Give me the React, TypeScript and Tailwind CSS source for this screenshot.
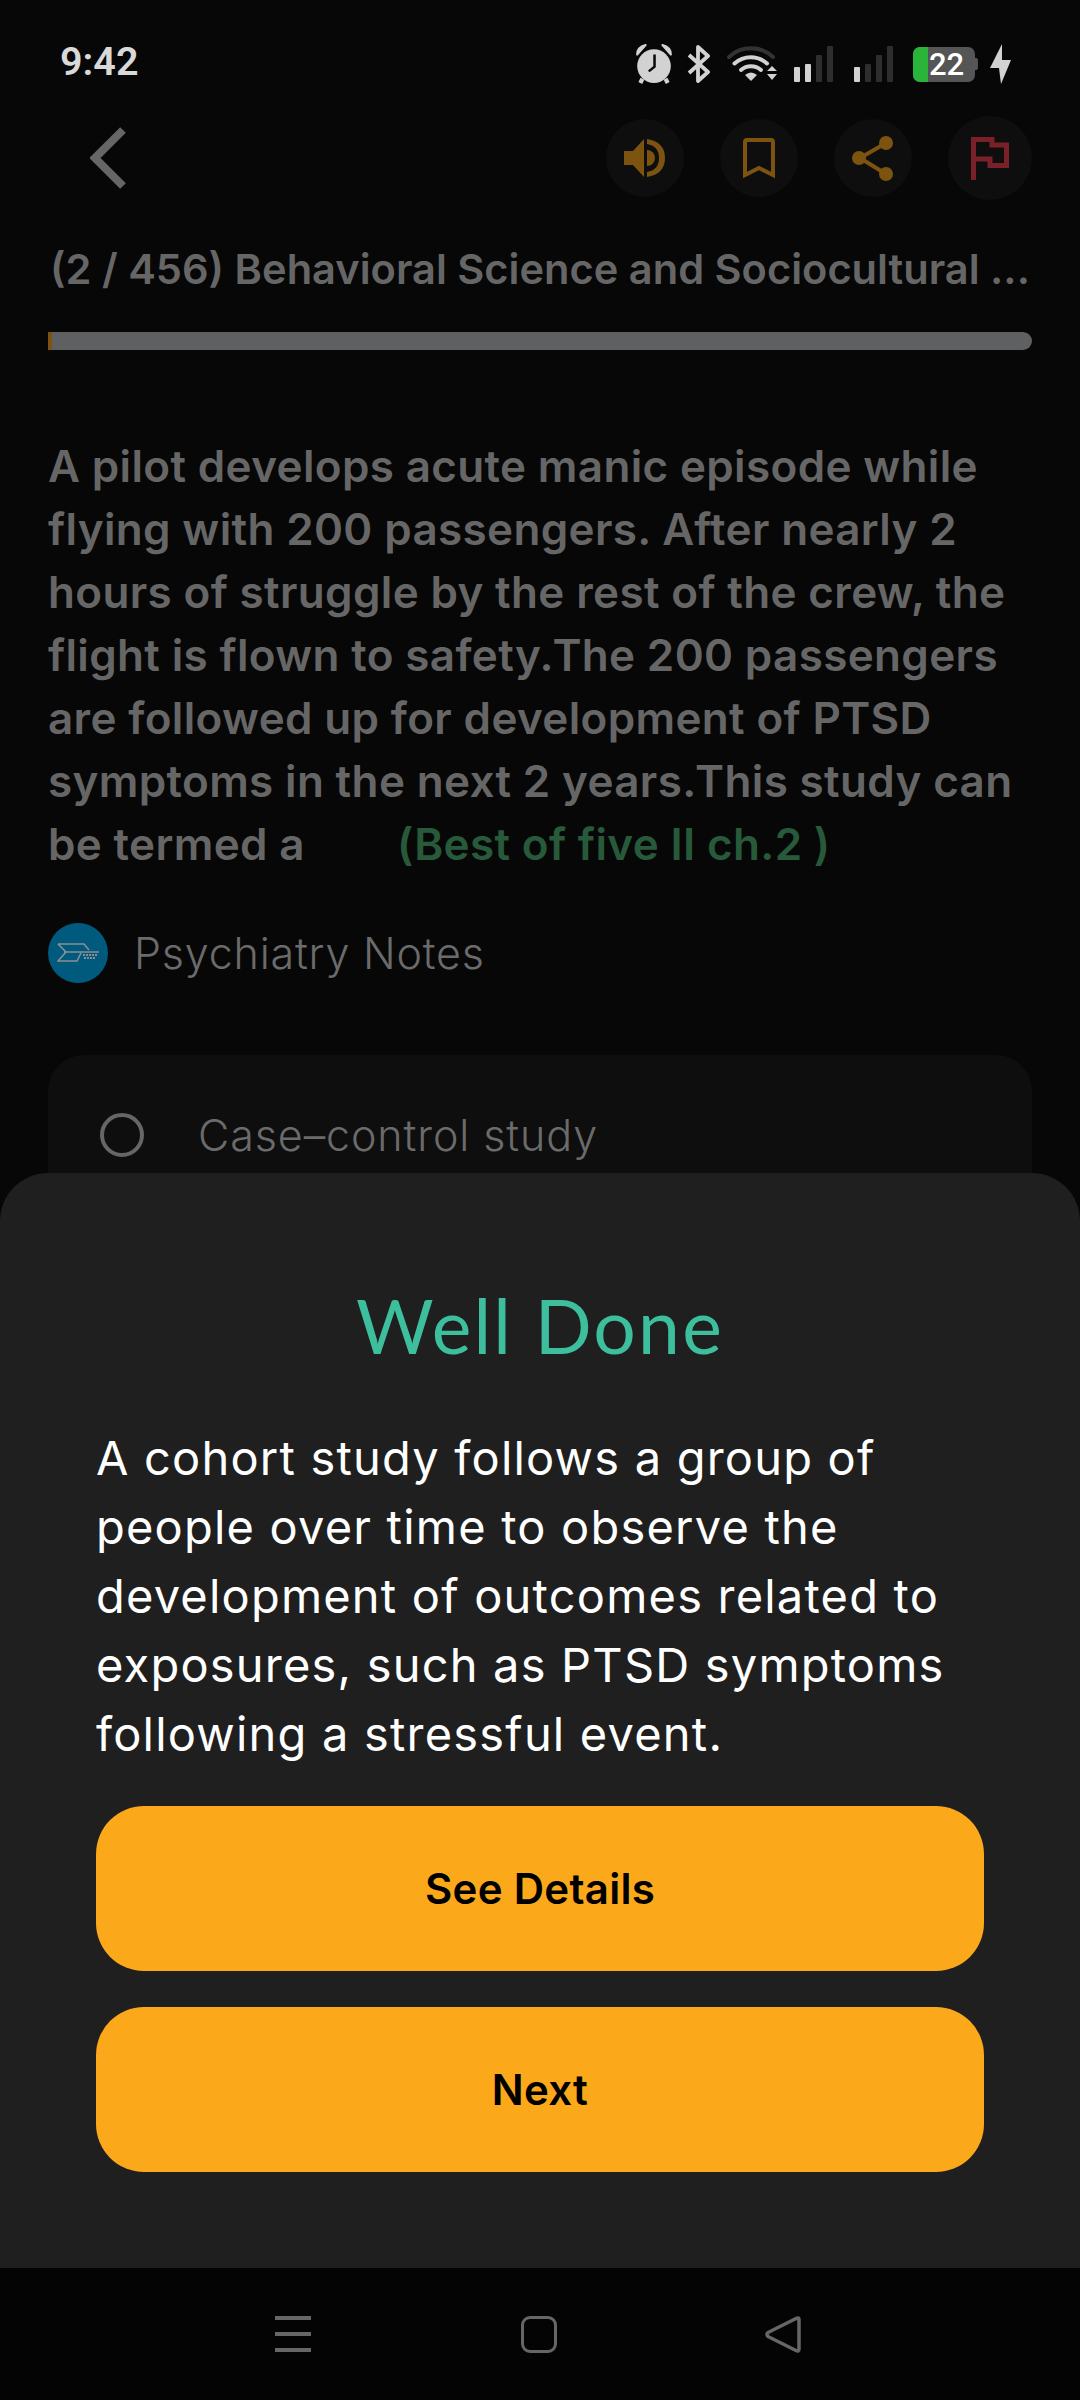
import React from "react";

const inter = { fontFamily: "Inter, 'Noto Sans', sans-serif" };

function Alarm() {
  return (
    <svg width="38" height="38" viewBox="0 0 38 38" className="-ml-[2px] h-[40px] w-[40px] shrink-0">
      <circle cx="19" cy="21" r="16" fill="#d2d2d2" />
      <path d="M3 10 Q3 3 11 1 Z" fill="#d2d2d2" stroke="#d2d2d2" strokeWidth="2" strokeLinejoin="round" />
      <path d="M35 10 Q35 3 27 1 Z" fill="#d2d2d2" stroke="#d2d2d2" strokeWidth="2" strokeLinejoin="round" />
      <path d="M8 33 L6 37 M30 33 L32 37" stroke="#d2d2d2" strokeWidth="4" />
      <path d="M19.5 10 V21.5 L14 26" fill="none" stroke="#0a0a0a" strokeWidth="2.4" />
    </svg>
  );
}

function Bluetooth() {
  return (
    <svg width="24" height="38" viewBox="0 0 24 38" className="shrink-0">
      <path d="M2 10 L21 27 L11 36 V2 L21 11 L2 28" fill="none" stroke="#d2d2d2" strokeWidth="3.8" strokeLinejoin="round" />
    </svg>
  );
}

function Wifi() {
  return (
    <svg width="50" height="38" viewBox="0 0 50 38" className="shrink-0">
      <path d="M2 12 A32 32 0 0 1 46 12" fill="none" stroke="#333333" strokeWidth="4" strokeLinecap="round" />
      <path d="M7.5 18.5 A24 24 0 0 1 40 18.5" fill="none" stroke="#d2d2d2" strokeWidth="4" strokeLinecap="round" />
      <path d="M14 25 A15 15 0 0 1 34 25" fill="none" stroke="#d2d2d2" strokeWidth="4" strokeLinecap="round" />
      <path d="M18 30 Q24 25 30 30 L24 36 Z" fill="#d2d2d2" />
      <path d="M45 21 L50 26 H40 Z M40 29 H50 L45 35 Z" fill="#d2d2d2" />
    </svg>
  );
}

function Signal({ lit }: { lit: number }) {
  const heights = [15, 18, 27, 36];
  return (
    <div className="flex h-[36px] w-[39px] shrink-0 items-end gap-[5px]">
      {heights.map((h, i) => (
        <div
          key={i}
          className={i < lit ? "w-[6px] rounded-[1px] bg-[#d2d2d2]" : "w-[6px] rounded-[1px] bg-[#2e2e2e]"}
          style={{ height: h }}
        />
      ))}
    </div>
  );
}

function Battery() {
  return (
    <div className="flex shrink-0 items-center">
      <div className="flex h-[35px] w-[62px] items-center rounded-[7px] bg-[#555555]">
        <div className="h-full w-[15px] rounded-l-[7px] bg-[#2ab53a]" />
        <span className="pl-[1px] text-[31px] leading-[35px] font-medium text-white" style={{ fontFamily: "Roboto, sans-serif" }}>
          22
        </span>
      </div>
      <div className="h-[12px] w-[3px] rounded-r-[2px] bg-[#555555]" />
    </div>
  );
}

function Bolt() {
  return (
    <svg width="22" height="40" viewBox="0 0 22 40" className="shrink-0">
      <path d="M12 0 L0 24 H9 L11 40 L21 16 H12 Z" fill="#d2d2d2" />
    </svg>
  );
}

function StatusBar() {
  return (
    <div className="flex h-[116px] shrink-0 items-start justify-between pt-[44px] pr-[68px] pl-[60px]">
      <span className="-mt-[2px] text-[39.5px] leading-[40px] font-semibold text-[#d9d9d9]" style={{ fontFamily: "Roboto, sans-serif" }}>
        9:42
      </span>
      <div className="flex items-center">
        <Alarm />
        <div className="w-[13px]" />
        <Bluetooth />
        <div className="w-[16px]" />
        <Wifi />
        <div className="w-[17px]" />
        <Signal lit={2} />
        <div className="w-[21px]" />
        <Signal lit={1} />
        <div className="w-[20px]" />
        <Battery />
        <div className="w-[12px]" />
        <Bolt />
      </div>
    </div>
  );
}

function Speaker() {
  return (
    <svg width="42" height="40" viewBox="0 0 42 40">
      <path d="M0 13 H9 L20 1 V39 L9 27 H0 Z" fill="#7c5410" />
      <path d="M23 12 A8 8 0 0 1 23 28 Z" fill="#7c5410" />
      <path d="M23 1 Q41 4 41 20 Q41 36 23 39 V34 Q35 32 35 20 Q35 8 23 6 Z" fill="#7c5410" />
    </svg>
  );
}

function Bookmark() {
  return (
    <svg width="32" height="40" viewBox="0 0 32 40">
      <path d="M2 37 V4 Q2 2 4 2 H28 Q30 2 30 4 V37 L16 30 Z" fill="none" stroke="#7c5410" strokeWidth="4" />
    </svg>
  );
}

function Share() {
  return (
    <svg width="42" height="46" viewBox="0 0 42 46">
      <path d="M34 8 L8 23 L34 39" fill="none" stroke="#7c5410" strokeWidth="4" />
      <circle cx="34" cy="8" r="7" fill="#7c5410" />
      <circle cx="7" cy="23" r="7" fill="#7c5410" />
      <circle cx="34" cy="39" r="7" fill="#7c5410" />
    </svg>
  );
}

function Flag() {
  return (
    <svg width="38" height="43" viewBox="0 0 38 43">
      <path d="M2.5 43 V2.5 H21 V8 H35.5 V28.5 H19 V22 H2.5" fill="none" stroke="#7a2029" strokeWidth="5" />
    </svg>
  );
}

function Header() {
  const circle = "flex h-[78px] w-[78px] items-center justify-center rounded-full bg-[#0e0e0e]";
  return (
    <div className="flex h-[84px] shrink-0 items-center justify-between pr-[48px] pl-[90px]">
      <svg width="36" height="62" viewBox="0 0 36 62">
        <path d="M33 3 L5 31 L33 59" fill="none" stroke="#666666" strokeWidth="8" />
      </svg>
      <div className="flex items-center gap-[36px]">
        <div className={circle}><Speaker /></div>
        <div className={circle}><Bookmark /></div>
        <div className={circle}><Share /></div>
        <div className="flex h-[84px] w-[84px] items-center justify-center rounded-full bg-[#0e0e0e]"><Flag /></div>
      </div>
    </div>
  );
}

function Logo() {
  return (
    <div className="flex h-[60px] w-[60px] shrink-0 items-center justify-center rounded-full bg-[#005a7d]">
      <svg width="42" height="20" viewBox="0 0 42 20">
        <path d="M1 1 H27 L32 7 M42 9 H15 L7 9 M1 1 L9 9 L1 18 H20 L24 10" fill="none" stroke="#8a8f92" strokeWidth="1.6" />
        <path d="M26 12 H40 M27 15 H38" stroke="#8a8f92" strokeWidth="2" strokeDasharray="2 1" />
      </svg>
    </div>
  );
}

function Question() {
  return (
    <div className="flex flex-col" style={inter}>
      <p className="mt-[44px] h-[50px] pl-[50px] text-[41.6px] leading-[50px] font-semibold whitespace-nowrap text-[#666666]">
        (2 / 456) Behavioral Science and Sociocultural ...
      </p>
      <div className="mx-[48px] mt-[38px] h-[18px] overflow-hidden rounded-l-[3px] rounded-r-full bg-[#5f6061]">
        <div className="h-full w-[4px] bg-[#7c5410]" />
      </div>
      <p className="mt-[85px] px-[48px] text-[44px] leading-[63px] font-semibold tracking-[0.35px] text-[#666666]">
        A pilot develops acute manic episode while flying with 200 passengers. After nearly 2 hours of struggle by the rest of the crew, the flight is flown to safety.The 200 passengers are followed up for development of PTSD symptoms in the next 2 years.This study can be termed a
        <span className="ml-[92px] font-semibold whitespace-nowrap text-[#275a3a]">(Best of five II ch.2 )</span>
      </p>
      <div className="mt-[47px] flex items-center gap-[26px] pl-[48px]">
        <Logo />
        <span className="text-[43px] leading-[60px] font-light tracking-[0.8px] text-[#6b6b6b]">Psychiatry Notes</span>
      </div>
      <div className="mx-[48px] mt-[72px] flex h-[200px] items-start gap-[54px] rounded-[36px] bg-[#0e0e0e] pt-[58px] pl-[52px]">
        <div className="h-[44px] w-[44px] shrink-0 rounded-full border-[4px] border-[#666666]" />
        <span className="text-[43px] leading-[44px] font-light tracking-[0.9px] text-[#6b6b6b]">Case–control study</span>
      </div>
    </div>
  );
}

function Sheet() {
  const button = "flex h-[165px] items-center justify-center rounded-[48px] bg-[#fba81b] text-[42px] font-semibold tracking-[0.3px] text-black";
  return (
    <div className="absolute inset-x-0 bottom-0 flex flex-col" style={inter}>
      <div className="flex h-[1095px] flex-col rounded-t-[48px] bg-[#1f1f1f] px-[96px]">
        <h2 className="mt-[102px] text-center text-[75px] leading-[100px] font-normal tracking-[2.2px] text-[#3dbf9e]" style={{ fontFamily: "Lato, sans-serif" }}>
          Well Done
        </h2>
        <p className="mt-[48px] text-[47px] leading-[69px] tracking-[1.2px] text-white">
          A cohort study follows a group of people over time to observe the development of outcomes related to exposures, such as PTSD symptoms following a stressful event.
        </p>
        <div className="mt-[38px] flex flex-col gap-[36px]">
          <div className={button}>See Details</div>
          <div className={button}>Next</div>
        </div>
      </div>
      <div className="flex h-[132px] items-start bg-[#040404] pt-[48px]">
        <div className="ml-[275px] flex h-[36px] w-[36px] flex-col justify-between">
          <div className="h-[4px] bg-[#666666]" />
          <div className="h-[4px] bg-[#666666]" />
          <div className="h-[4px] bg-[#666666]" />
        </div>
        <div className="ml-[210px] h-[37px] w-[36px] rounded-[9px] border-[3.5px] border-[#666666]" />
        <svg width="36" height="37" viewBox="0 0 36 37" className="ml-[208px]">
          <path d="M33 2 Q34 2 34 4 V33 Q34 36 31 34.5 L3 20.5 Q1 18.5 3 16.5 L31 2.5 Z" fill="none" stroke="#666666" strokeWidth="3.5" strokeLinejoin="round" />
        </svg>
      </div>
    </div>
  );
}

export default function App() {
  return (
    <div className="relative flex h-[2400px] w-[1080px] flex-col overflow-hidden bg-[#070707]">
      <StatusBar />
      <Header />
      <Question />
      <Sheet />
    </div>
  );
}
